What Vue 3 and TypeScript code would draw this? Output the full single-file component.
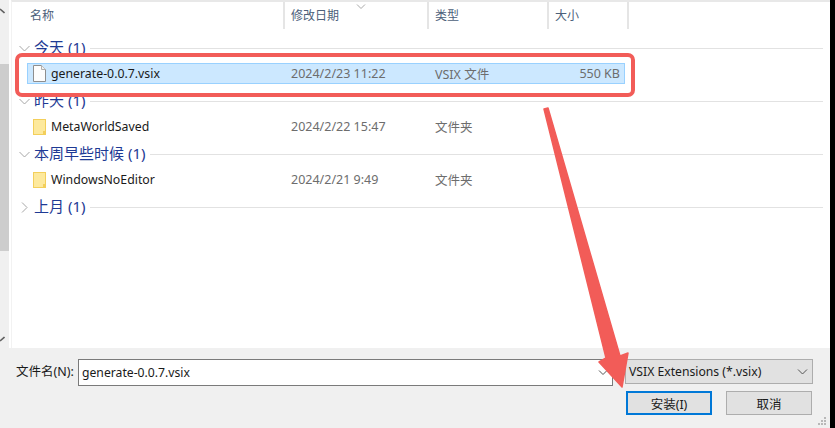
<script setup lang="ts">
interface Row { name: string; date: string; type: string; size: string; kind: 'file' | 'folder'; selected?: boolean }
interface Group { title: string; count: number; open: boolean; rows: Row[] }

const columns = [
  { label: '名称', cls: 'col-name' },
  { label: '修改日期', cls: 'col-date' },
  { label: '类型', cls: 'col-type' },
  { label: '大小', cls: 'col-size' },
]

const groups: Group[] = [
  { title: '今天', count: 1, open: true, rows: [{ name: 'generate-0.0.7.vsix', date: '2024/2/23 11:22', type: 'VSIX 文件', size: '550 KB', kind: 'file', selected: true }] },
  { title: '昨天', count: 1, open: true, rows: [{ name: 'MetaWorldSaved', date: '2024/2/22 15:47', type: '文件夹', size: '', kind: 'folder' }] },
  { title: '本周早些时候', count: 1, open: true, rows: [{ name: 'WindowsNoEditor', date: '2024/2/21 9:49', type: '文件夹', size: '', kind: 'folder' }] },
  { title: '上月', count: 1, open: false, rows: [] },
]
</script>

<template>
  <div class="window">
    <div class="dialog">
      <div class="browser">
        <div class="scrollbar">
          <svg class="tick" width="5" height="6" viewBox="0 0 5 6"><path d="M0 1l4.500 4" fill="none" stroke="#606060" stroke-width="1.600" /></svg>
          <div class="thumb"></div>
          <svg class="tick tick-bottom" width="5" height="6" viewBox="0 0 5 6"><path d="M0 5l4.500-4" fill="none" stroke="#606060" stroke-width="1.600" /></svg>
        </div>
        <div class="list">
          <div class="header">
            <div v-for="c in columns" :key="c.label" class="head-cell" :class="c.cls">{{ c.label }}</div>
            <svg class="sort" width="10" height="5" viewBox="0 0 10 5"><path d="M1 .5l4 4 4-4" fill="none" stroke="#a8a8a8" /></svg>
          </div>
          <div class="groups">
            <div v-for="g in groups" :key="g.title" class="group">
              <div class="group-head">
                <svg class="chev" width="11" height="11" viewBox="0 0 11 11">
                  <path v-if="g.open" d="M.5 3l5 5 5-5" fill="none" stroke="#a6a6a6" />
                  <path v-else d="M3 .5l5 5-5 5" fill="none" stroke="#a6a6a6" />
                </svg>
                <span class="group-title">{{ g.title }} ({{ g.count }})</span>
                <span class="group-line"></span>
              </div>
              <div v-for="r in g.rows" :key="r.name" class="row" :class="{ selected: r.selected }">
                <div class="cell col-name name">
                  <svg v-if="r.kind === 'file'" class="icon" width="13" height="17" viewBox="0 0 13 17">
                    <path d="M.5.500h8l4 4v12H.500z" fill="#fdfdfd" stroke="#8e8e8e" />
                    <path d="M8.500.500v4h4" fill="#f2f2f2" stroke="#b0b0b0" />
                  </svg>
                  <svg v-else class="icon" width="13" height="16" viewBox="0 0 13 16">
                    <path d="M0 0h13v16H0z" fill="#f3cf5b" />
                    <path d="M1 1h11v11h-2v3H1z" fill="#fde99d" />
                  </svg>
                  <span>{{ r.name }}</span>
                </div>
                <div class="cell col-date">{{ r.date }}</div>
                <div class="cell col-type">{{ r.type }}</div>
                <div class="cell col-size size">{{ r.size }}</div>
              </div>
            </div>
          </div>
        </div>
      </div>
      <div class="footer">
        <div class="line-one">
          <label class="file-label">文件名(N):</label>
          <div class="file-input">
            <span>generate-0.0.7.vsix</span>
            <svg width="10" height="6" viewBox="0 0 10 6"><path d="M1 .5l4 4 4-4" fill="none" stroke="#555" /></svg>
          </div>
          <div class="filter">
            <span>VSIX Extensions (*.vsix)</span>
            <svg width="11" height="6" viewBox="0 0 11 6"><path d="M1 .5l4.500 4.500 4.500-4.500" fill="none" stroke="#555" /></svg>
          </div>
        </div>
        <div class="line-two">
          <button class="btn primary">安装(I)</button>
          <button class="btn">取消</button>
        </div>
        <svg class="grip" width="9" height="9" viewBox="0 0 9 9" fill="#b8b8b8">
          <rect x="6" y="0" width="2" height="2" /><rect x="3" y="3" width="2" height="2" /><rect x="6" y="3" width="2" height="2" />
          <rect x="0" y="6" width="2" height="2" /><rect x="3" y="6" width="2" height="2" /><rect x="6" y="6" width="2" height="2" />
        </svg>
      </div>
    </div>
    <div class="edge"></div>

    <div class="callout"></div>
    <svg class="arrow" width="835" height="428" viewBox="0 0 835 428">
      <path d="M544 109l4-1 72 248 8-3-6 34-23-25 7-4z" fill="#f25c58" stroke="#f25c58" stroke-width="1.500" stroke-linejoin="round" />
    </svg>
  </div>
</template>

<style>
html, body { margin: 0; background: #fff; }
</style>

<style scoped>
.window {
  position: relative;
  width: 835px;
  height: 428px;
  display: flex;
  overflow: hidden;
  font-family: "Noto Sans", "Noto Sans CJK SC", sans-serif;
  font-size: 12px;
}
.dialog { width: 830px; display: flex; flex-direction: column; }
.edge { width: 5px; background: #000; }
.browser { height: 348px; display: flex; background: #fff; }
.scrollbar {
  position: relative;
  width: 9px;
  background: #f0f0f0;
  flex: none;
}
.thumb { width: 9px; height: 187px; margin-top: 64px; background: #cdcdcd; }
.tick { position: absolute; left: 0; top: 8px; }
.tick-bottom { top: 336px; }
.list {
  flex: 1;
  margin-left: 2px;
  border-left: 1px solid #f2f2f2;
  border-top: 2px solid #e8e8e8;
  padding-left: 7px;
  padding-right: 7px;
  position: relative;
}
.header { display: flex; height: 27px; position: relative; }
.head-cell {
  color: #4c607a;
  font-size: 12px;
  line-height: 28px;
  border-right: 2px solid #e5e5e5;
  box-sizing: border-box;
}
.sort { position: absolute; left: 337px; top: 2px; }
.col-name { width: 266px; flex: none; }
.col-date { width: 144px; flex: none; }
.col-type { width: 120px; flex: none; }
.col-size { width: 80px; flex: none; }
.head-cell.col-name { padding-left: 11px; }
.head-cell.col-date { padding-left: 6px; }
.head-cell.col-type { padding-left: 6px; }
.head-cell.col-size { padding-left: 6px; }
.groups { padding-top: 8px; }
.group { height: 53px; }
.group-head {
  display: flex;
  align-items: center;
  height: 22px;
  margin-bottom: 4px;
}
.chev { flex: none; }
.group-title {
  margin-left: 4px;
  margin-top: -3px;
  font-size: 15px;
  color: #1e3a94;
  white-space: nowrap;
}
.group-line { flex: 1; height: 1px; background: #e2e2e2; margin-left: 5px; }
.row {
  display: flex;
  align-items: center;
  height: 21px;
  margin-left: 8px;
  width: 598px;
  box-sizing: border-box;
  color: #6d6d6d;
  font-size: 12.500px;
}
.selected { background: #cce8ff; outline: 1px solid #99d1ff; outline-offset: -1px; }
.cell { box-sizing: border-box; }
.row .col-name { width: 264px; }
.row .col-date { width: 144px; }
.row .col-type { width: 118px; }
.row .col-size { width: 72px; }
.name { display: flex; align-items: center; gap: 5px; padding-left: 6px; color: #1a1a1a; font-size: 12.300px; }
.icon { flex: none; }
.size { text-align: right; padding-right: 5px; }
.footer {
  position: relative;
  flex: 1;
  background: #f0f0f0;
  padding: 11px 0 0 16px;
  box-sizing: border-box;
}
.line-one { display: flex; align-items: flex-start; }
.file-label { width: 62px; line-height: 26px; font-size: 12.500px; color: #1a1a1a; flex: none; }
.file-input {
  width: 535px;
  height: 27px;
  box-sizing: border-box;
  border: 1px solid #7a7a7a;
  background: #fff;
  display: flex;
  align-items: center;
  justify-content: space-between;
  padding: 0 4px 0 3px;
  font-size: 12.200px;
  color: #1a1a1a;
}
.filter {
  width: 188px;
  height: 25px;
  margin-left: 12px;
  box-sizing: border-box;
  border: 1px solid #adadad;
  background: #e1e1e1;
  display: flex;
  align-items: center;
  justify-content: space-between;
  padding: 0 4px 0 3px;
  font-size: 12.200px;
  color: #1a1a1a;
}
.line-two { display: flex; gap: 14px; margin-top: 5px; margin-left: 610px; }
.btn {
  width: 86px;
  height: 24px;
  box-sizing: border-box;
  border: 1px solid #adadad;
  background: #e1e1e1;
  font: inherit;
  font-size: 12.500px;
  color: #1a1a1a;
  padding: 0;
  border-radius: 0;
}
.primary { border: 2px solid #0078d7; }
.grip { position: absolute; right: 3px; bottom: 2px; }
.callout {
  position: absolute;
  left: 15px;
  top: 53px;
  width: 620px;
  height: 44px;
  box-sizing: border-box;
  border: 4px solid #f25c58;
  border-radius: 7px;
}
.arrow { position: absolute; left: 0; top: 0; pointer-events: none; }
</style>
